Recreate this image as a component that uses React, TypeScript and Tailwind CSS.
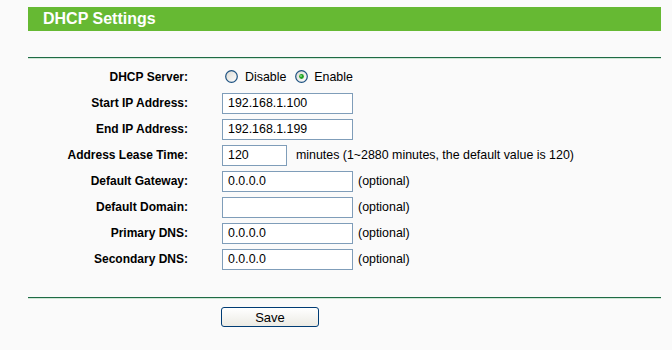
import React from "react";

const font = { fontFamily: '"Liberation Sans", Arial, sans-serif' };

interface Row {
  label: string;
  value?: string;
  width: "wide" | "short";
  note?: string;
}

const rows: Row[] = [
  { label: "Start IP Address:", value: "192.168.1.100", width: "wide" },
  { label: "End IP Address:", value: "192.168.1.199", width: "wide" },
  { label: "Address Lease Time:", value: "120", width: "short", note: "minutes (1~2880 minutes, the default value is 120)" },
  { label: "Default Gateway:", value: "0.0.0.0", width: "wide", note: "(optional)" },
  { label: "Default Domain:", value: "", width: "wide", note: "(optional)" },
  { label: "Primary DNS:", value: "0.0.0.0", width: "wide", note: "(optional)" },
  { label: "Secondary DNS:", value: "0.0.0.0", width: "wide", note: "(optional)" },
];

function Radio({ checked }: { checked?: boolean }) {
  return (
    <svg width="13" height="13" viewBox="0 0 13 13" className="shrink-0">
      <defs>
        <linearGradient id={checked ? "rg1" : "rg0"} x1="0" y1="0" x2="1" y2="1">
          <stop offset="0" stopColor="#dcdad2" />
          <stop offset="1" stopColor="#ffffff" />
        </linearGradient>
      </defs>
      <circle cx="6.5" cy="6.5" r="5.8" fill={`url(#${checked ? "rg1" : "rg0"})`} stroke="#1c5180" strokeWidth="1.2" />
      {checked && (
        <>
          <circle cx="6.5" cy="6.5" r="2.4" fill="#21a121" />
          <circle cx="6" cy="6" r="0.9" fill="#8ee08e" />
        </>
      )}
    </svg>
  );
}

function Field({ value, width }: { value?: string; width: "wide" | "short" }) {
  return (
    <div
      className={`h-[21px] ${width === "wide" ? "w-[131px]" : "w-[65px]"} border border-[#7f9db9] bg-white flex items-center pl-[5px] text-[12.4px] text-black shrink-0`}
    >
      {value}
    </div>
  );
}

export default function App() {
  return (
    <div className="w-[672px] h-[350px] bg-[#fafafa] pt-[7px] pl-[28px]" style={font}>
      <div className="w-[633px]">
        {/* title bar */}
        <div className="h-[24px] bg-[#66b933] flex items-center pl-[15px]">
          <span className="text-white font-bold text-[16px] leading-none">DHCP Settings</span>
        </div>

        <div className="mt-[26px] border-t border-[#1e6b45] border-b border-b-[#cfe6d6]" />

        <div className="mt-[5px] flex flex-col">
          <div className="h-[26px] flex items-center">
            <div className="w-[160px] text-right font-bold text-[12px] text-black">DHCP Server:</div>
            <div className="ml-[37px] flex items-center text-[12.4px] text-black">
              <Radio />
              <span className="ml-[7px]">Disable</span>
              <span className="ml-[9px]">
                <Radio checked />
              </span>
              <span className="ml-[6px]">Enable</span>
            </div>
          </div>

          {rows.map((row) => (
            <div key={row.label} className="h-[26px] flex items-center">
              <div className="w-[160px] text-right font-bold text-[12px] text-black">{row.label}</div>
              <div className="ml-[34px] flex items-center">
                <Field value={row.value} width={row.width} />
                {row.note && (
                  <span className={`${row.width === "short" ? "ml-[9px]" : "ml-[5px]"} text-[12.4px] text-black`}>
                    {row.note}
                  </span>
                )}
              </div>
            </div>
          ))}
        </div>

        <div className="mt-[25px] border-t border-[#1e6b45] border-b border-b-[#cfe6d6]" />

        <div className="mt-[8px] pl-[193px] flex">
          <button className="w-[98px] h-[20px] border border-[#003c74] rounded-[3px] bg-linear-to-b from-white to-[#ecebe4] text-[13px] text-black leading-none">
            Save
          </button>
        </div>
      </div>
    </div>
  );
}
